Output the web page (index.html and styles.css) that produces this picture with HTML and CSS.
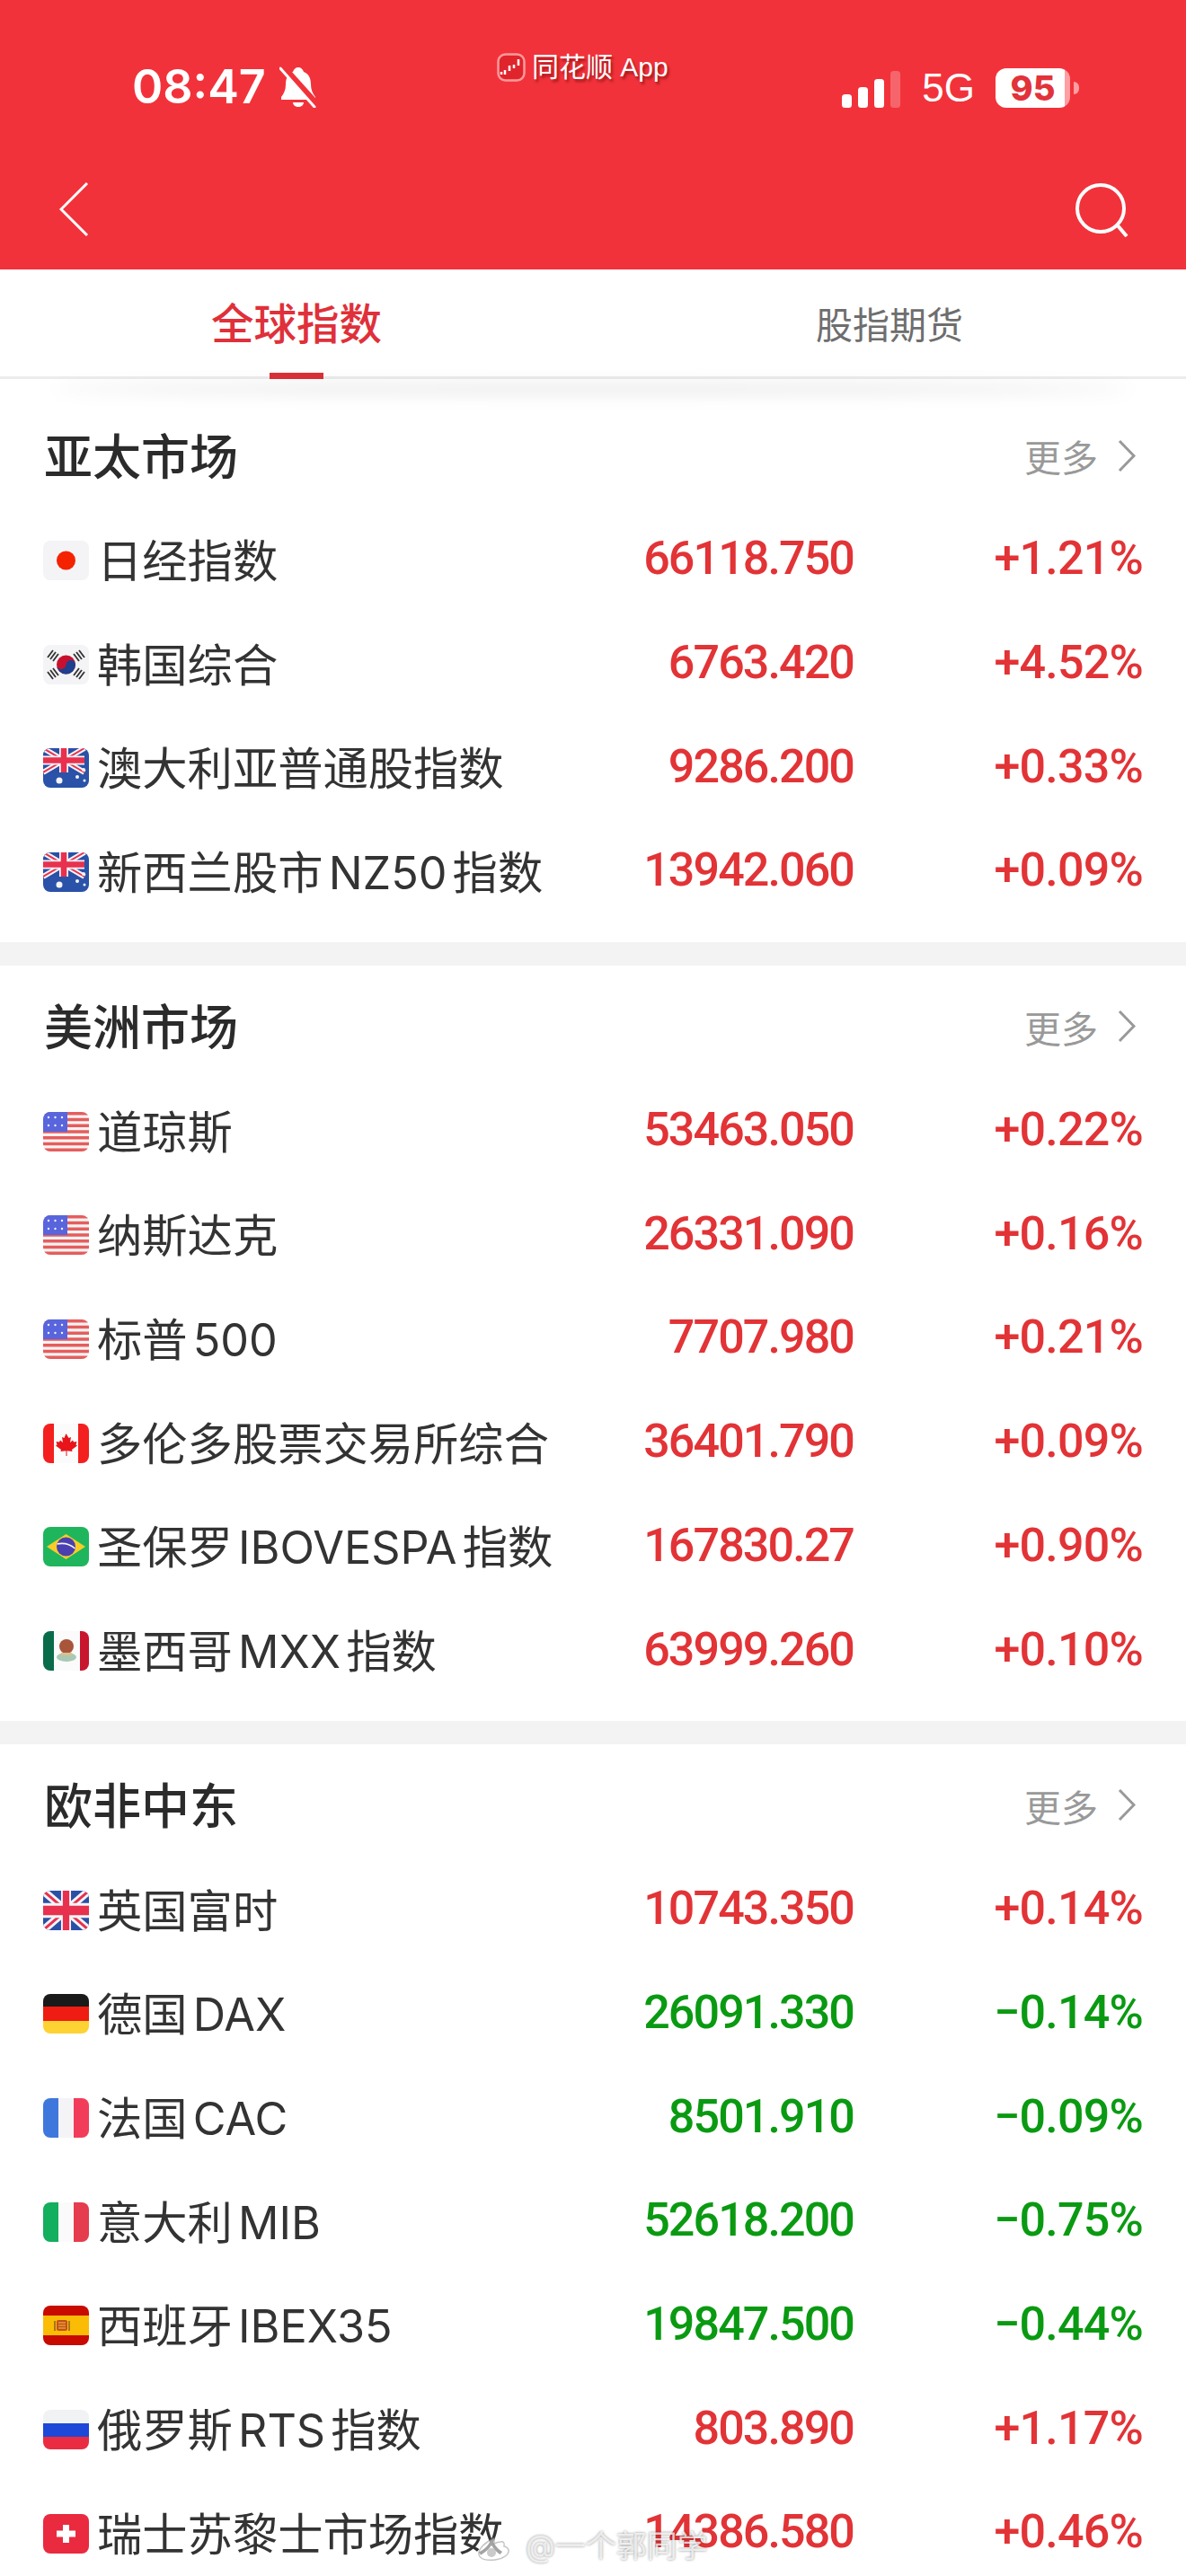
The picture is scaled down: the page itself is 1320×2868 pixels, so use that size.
FILE: index.html
```html
<!DOCTYPE html>
<html>

<head>
    <title>全球指数</title>
    <link rel="stylesheet" href="styles.css">
</head>

<body>
    <svg class="defs" width="0" height="0">
        <defs>
            <g id="jack">
                <rect width="46" height="27" fill="#2a4fa6" />
                <path d="M0 0L46 27M46 0L0 27" stroke="#f4f4f6" stroke-width="6" />
                <path d="M0 0L46 27M46 0L0 27" stroke="#e8304f" stroke-width="2" />
                <path d="M23 0V27M0 13.500H46" stroke="#f4f4f6" stroke-width="10" />
                <path d="M23 0V27M0 13.500H46" stroke="#e8304f" stroke-width="6.500" />
            </g>
            <symbol id="f-jp" viewBox="0 0 51 44">
                <rect width="51" height="44" fill="#f4f4f6" />
                <circle cx="25.500" cy="22" r="10.500" fill="#f52200" />
            </symbol>
            <symbol id="f-kr" viewBox="0 0 51 44">
                <rect width="51" height="44" fill="#f4f4f6" />
                <circle cx="25.500" cy="22" r="10.500" fill="#c8102e" />
                <path d="M15 22a10.500 10.500 0 0 0 21 0c0-3-2.500-5-5.200-5s-5.300 2.500-5.300 5-2.500 5-5.200 5-5.300-2-5.300-5z" fill="#1f3f8f" />
                <g stroke="#333" stroke-width="1.800">
                    <path d="M6 14L12 6M9 16L15 8M12 18L18 10" transform="translate(-1 0)" />
                    <path d="M45 14L39 6M42 16L36 8M39 18L33 10" transform="translate(1 0)" />
                    <path d="M6 30L12 38M9 28L15 36M12 26L18 34" transform="translate(-1 0)" />
                    <path d="M45 30L39 38M42 28L36 36M39 26L33 34" transform="translate(1 0)" />
                </g>
            </symbol>
            <symbol id="f-au" viewBox="0 0 51 44">
                <rect width="51" height="44" fill="#2a52a8" />
                <use href="#jack" />
                <g fill="#f4f4f6">
                    <circle cx="18" cy="36" r="3.500" />
                    <circle cx="45" cy="24" r="2" />
                    <circle cx="38" cy="32" r="2" />
                    <circle cx="46" cy="36" r="1.500" />
                </g>
            </symbol>
            <symbol id="f-us" viewBox="0 0 51 44">
                <rect width="51" height="44" fill="#f7f3f3" />
                <path d="M0 1.700H51M0 8.500H51M0 15.300H51M0 22H51M0 28.800H51M0 35.500H51M0 42.300H51" stroke="#e55d5d" stroke-width="3.400" />
                <rect width="27" height="22" fill="#5865dc" />
                <g fill="#f4f4f6">
                    <circle cx="6" cy="6" r="1.200" /><circle cx="13.500" cy="6" r="1.200" /><circle cx="21" cy="6" r="1.200" />
                    <circle cx="6" cy="15" r="1.200" /><circle cx="13.500" cy="15" r="1.200" /><circle cx="21" cy="15" r="1.200" />
                </g>
            </symbol>
            <symbol id="f-ca" viewBox="0 0 51 44">
                <rect width="51" height="44" fill="#fbfbfb" />
                <rect width="12" height="44" fill="#f41f1f" />
                <rect x="39" width="12" height="44" fill="#f41f1f" />
                <path d="M25.500 11l3 5 2.500-1-1 6 3-2.500 1 2 3.500-.5-1 3.500 1.500 1-6 4.500.5 2-6-.8V36h-1v-5.800l-6 .8.500-2-6-4.500 1.500-1-1-3.500 3.500.5 1-2 3 2.500-1-6 2.500 1z" fill="#e8141a" />
            </symbol>
            <symbol id="f-br" viewBox="0 0 51 44">
                <rect width="51" height="44" fill="#1fb55c" />
                <path d="M25.500 8L47 22 25.500 36 4 22z" fill="#f7cc2a" />
                <circle cx="25.500" cy="22" r="10.500" fill="#4a3fb0" />
                <path d="M15.500 19c7-1.500 14 0 20 5" stroke="#f4f4f6" stroke-width="1.600" fill="none" />
            </symbol>
            <symbol id="f-mx" viewBox="0 0 51 44">
                <rect width="51" height="44" fill="#fbfbfb" />
                <rect width="12" height="44" fill="#0a6b4b" />
                <rect x="41" width="10" height="44" fill="#c8162e" />
                <ellipse cx="26" cy="17" rx="8" ry="8" fill="#a8553a" />
                <ellipse cx="26" cy="29" rx="11" ry="5" fill="#a9c9b4" />
                <rect x="20" y="24" width="12" height="3" fill="#d9c08f" />
            </symbol>
            <symbol id="f-gb" viewBox="0 0 46 27" preserveAspectRatio="none">
                <use href="#jack" />
            </symbol>
            <symbol id="f-de" viewBox="0 0 51 44">
                <rect width="51" height="15" fill="#1a1a1a" />
                <rect y="14" width="51" height="16" fill="#ee1c12" />
                <rect y="30" width="51" height="14" fill="#fdd334" />
            </symbol>
            <symbol id="f-fr" viewBox="0 0 51 44">
                <rect width="51" height="44" fill="#f4f4f6" />
                <rect width="17" height="44" fill="#3f78dd" />
                <rect x="34" width="17" height="44" fill="#f23d5a" />
            </symbol>
            <symbol id="f-it" viewBox="0 0 51 44">
                <rect width="51" height="44" fill="#fafafa" />
                <rect width="17" height="44" fill="#13ae5e" />
                <rect x="34" width="17" height="44" fill="#e53d4d" />
            </symbol>
            <symbol id="f-es" viewBox="0 0 51 44">
                <rect width="51" height="44" fill="#c80a00" />
                <rect y="11" width="51" height="22" fill="#fbbc05" />
                <rect x="15" y="16" width="12" height="12" rx="2" fill="#c4501a" />
                <path d="M13 17v11M29 17v11" stroke="#a8761a" stroke-width="2" />
                <path d="M17 19h8M17 22h8M17 25h8" stroke="#f3c44a" stroke-width="1" />
            </symbol>
            <symbol id="f-ru" viewBox="0 0 51 44">
                <rect width="51" height="15" fill="#f1f2f4" />
                <rect y="15" width="51" height="15" fill="#1d48d8" />
                <rect y="30" width="51" height="14" fill="#ea2c42" />
            </symbol>
            <symbol id="f-ch" viewBox="0 0 51 44">
                <rect width="51" height="44" fill="#ea2a3f" />
                <path d="M22 12h7v6.500h7v7h-7V32h-7v-6.500h-7v-7h7z" fill="#fff" />
            </symbol>
        </defs>
    </svg>

    <div class="page">
        <header class="top">
            <div class="status">
                <div class="clock">
                    <span class="time">08:47</span>
                    <svg class="bell" viewBox="0 0 42 47">
                        <path d="M21 2c3 0 5 2 6 5 6 2 8 8 8 14 0 6 2 10 5 14v3H2v-3c3-4 5-8 5-14 0-6 2-12 8-14 1-3 3-5 6-5z" fill="#fff" />
                        <path d="M15 41h12c0 3-3 5-6 5s-6-2-6-5z" fill="#fff" />
                        <path d="M4 2L41 43" stroke="#f2323a" stroke-width="8" />
                        <path d="M1 3L39 46" stroke="#fff" stroke-width="3" stroke-linecap="round" />
                    </svg>
                </div>
                <div class="signal">
                    <svg class="bars" viewBox="0 0 65 41" width="65" height="41">
                        <rect x="0" y="26" width="11" height="15" rx="3.500" fill="#fff" />
                        <rect x="18" y="18" width="11" height="23" rx="3.500" fill="#fff" />
                        <rect x="36" y="9" width="11" height="32" rx="3.500" fill="#fff" />
                        <rect x="54" y="0" width="11" height="41" rx="3.500" fill="#fff" fill-opacity="0.25" />
                    </svg>
                    <span class="net">5G</span>
                    <div class="battery">
                        <span class="level">95</span>
                        <span class="nub"></span>
                    </div>
                </div>
            </div>

            <div class="app-mark">
                <svg class="app-logo" viewBox="0 0 32 32" width="32" height="32">
                    <rect x="1.500" y="1.500" width="29" height="29" rx="8" fill="#e0242c" stroke="#ff9a9a" stroke-width="2.500" />
                    <path d="M5 24v-3M9 24v-5M14 20v-6M19 17v-4M24 14V7" stroke="#fff" stroke-width="2.500" />
                </svg>
                <span>同花顺 App</span>
            </div>

            <nav class="nav">
                <svg class="back" viewBox="0 0 33 61" width="33" height="61">
                    <path d="M31 1L2 30l29 29" fill="none" stroke="#fff" stroke-width="3" />
                </svg>
                <svg class="find" viewBox="0 0 60 60" width="60" height="60">
                    <circle cx="28" cy="28" r="26" fill="none" stroke="#fff" stroke-width="4" />
                    <path d="M46 46l11 13" fill="none" stroke="#fff" stroke-width="4" />
                </svg>
            </nav>
        </header>

        <div class="tabs">
            <div class="tab active">全球指数</div>
            <div class="tab">股指期货</div>
        </div>

        <div class="list">
            <section class="market">
                <div class="market-head">
                    <h2>亚太市场</h2>
                    <a class="more">更多<svg viewBox="0 0 20 37" width="20" height="37"><path d="M2 2l16 16.500L2 35" fill="none" stroke="#999" stroke-width="3" /></svg></a>
                </div>
                <div class="row"><svg class="flag"><use href="#f-jp" /></svg><span class="name">日经指数</span><span class="num up">66118.750</span><span class="pct up">+1.21%</span></div>
                <div class="row"><svg class="flag"><use href="#f-kr" /></svg><span class="name">韩国综合</span><span class="num up">6763.420</span><span class="pct up">+4.52%</span></div>
                <div class="row"><svg class="flag"><use href="#f-au" /></svg><span class="name">澳大利亚普通股指数</span><span class="num up">9286.200</span><span class="pct up">+0.33%</span></div>
                <div class="row"><svg class="flag"><use href="#f-au" /></svg><span class="name">新西兰股市 NZ50 指数</span><span class="num up">13942.060</span><span class="pct up">+0.09%</span></div>
            </section>

            <section class="market">
                <div class="market-head">
                    <h2>美洲市场</h2>
                    <a class="more">更多<svg viewBox="0 0 20 37" width="20" height="37"><path d="M2 2l16 16.500L2 35" fill="none" stroke="#999" stroke-width="3" /></svg></a>
                </div>
                <div class="row"><svg class="flag"><use href="#f-us" /></svg><span class="name">道琼斯</span><span class="num up">53463.050</span><span class="pct up">+0.22%</span></div>
                <div class="row"><svg class="flag"><use href="#f-us" /></svg><span class="name">纳斯达克</span><span class="num up">26331.090</span><span class="pct up">+0.16%</span></div>
                <div class="row"><svg class="flag"><use href="#f-us" /></svg><span class="name">标普 500</span><span class="num up">7707.980</span><span class="pct up">+0.21%</span></div>
                <div class="row"><svg class="flag"><use href="#f-ca" /></svg><span class="name">多伦多股票交易所综合</span><span class="num up">36401.790</span><span class="pct up">+0.09%</span></div>
                <div class="row"><svg class="flag"><use href="#f-br" /></svg><span class="name">圣保罗 IBOVESPA 指数</span><span class="num up">167830.27</span><span class="pct up">+0.90%</span></div>
                <div class="row"><svg class="flag"><use href="#f-mx" /></svg><span class="name">墨西哥 MXX 指数</span><span class="num up">63999.260</span><span class="pct up">+0.10%</span></div>
            </section>

            <section class="market">
                <div class="market-head">
                    <h2>欧非中东</h2>
                    <a class="more">更多<svg viewBox="0 0 20 37" width="20" height="37"><path d="M2 2l16 16.500L2 35" fill="none" stroke="#999" stroke-width="3" /></svg></a>
                </div>
                <div class="row"><svg class="flag"><use href="#f-gb" /></svg><span class="name">英国富时</span><span class="num up">10743.350</span><span class="pct up">+0.14%</span></div>
                <div class="row"><svg class="flag"><use href="#f-de" /></svg><span class="name">德国 DAX</span><span class="num down">26091.330</span><span class="pct down">−0.14%</span></div>
                <div class="row"><svg class="flag"><use href="#f-fr" /></svg><span class="name">法国 CAC</span><span class="num down">8501.910</span><span class="pct down">−0.09%</span></div>
                <div class="row"><svg class="flag"><use href="#f-it" /></svg><span class="name">意大利 MIB</span><span class="num down">52618.200</span><span class="pct down">−0.75%</span></div>
                <div class="row"><svg class="flag"><use href="#f-es" /></svg><span class="name">西班牙 IBEX35</span><span class="num down">19847.500</span><span class="pct down">−0.44%</span></div>
                <div class="row"><svg class="flag"><use href="#f-ru" /></svg><span class="name">俄罗斯 RTS 指数</span><span class="num up">803.890</span><span class="pct up">+1.17%</span></div>
                <div class="row"><svg class="flag"><use href="#f-ch" /></svg><span class="name">瑞士苏黎士市场指数</span><span class="num up">14386.580</span><span class="pct up">+0.46%</span></div>
            </section>
        </div>

        <div class="stamp">
            <svg class="stamp-logo" viewBox="0 0 48 34" width="48" height="34">
                <path d="M20 8C10 12 2 20 3 26c1 6 10 7 18 6 9-1 16-6 15-11-1-3-4-4-5-4 1-4-1-6-4-5-2 0-5 1-7 2z" fill="#fff" fill-opacity="0.55" stroke="#8a8a8a" stroke-opacity="0.5" stroke-width="1.500" />
                <circle cx="17" cy="24" r="5" fill="#8a8a8a" fill-opacity="0.45" />
                <path d="M34 2c6 0 11 5 10 12M35 8c3 0 5 2 4 6" fill="none" stroke="#fff" stroke-opacity="0.7" stroke-width="2" />
            </svg>
            <span>@一个郭同学</span>
        </div>
    </div>
</body>

</html>
```

FILE: styles.css
```css
* {
    box-sizing: border-box;
}

body {
    margin: 0;
    background: #fff;
    font-family: Inter, "Noto Sans CJK SC", sans-serif;
    color: #333;
}

.defs {
    position: absolute;
}

.page {
    position: relative;
    width: 1320px;
    height: 2868px;
    overflow: hidden;
}

/* red header */
.top {
    position: relative;
    height: 300px;
    padding-top: 74px;
    background-color: #f2323a;
    color: #fff;
}

.status {
    display: flex;
    justify-content: space-between;
    align-items: flex-end;
    height: 46px;
    padding: 0 129px 0 147px;
}

.clock {
    display: flex;
    align-items: center;
    gap: 15px;
}

.time {
    font-family: Inter, sans-serif;
    font-size: 52px;
    font-weight: 600;
    line-height: 46px;
}

.bell {
    width: 42px;
    height: 47px;
}

.signal {
    display: flex;
    align-items: flex-end;
    height: 44px;
}

.bars {
    margin-right: 24px;
}

.net {
    font-family: "Liberation Sans", sans-serif;
    font-size: 44px;
    line-height: 44px;
    margin-right: 23px;
}

.battery {
    position: relative;
    width: 83px;
    height: 44px;
    border-radius: 12px;
    background: linear-gradient(to right, #fff 93%, #ff9ea3 93%);
    color: #e2323a;
    font-family: Inter, sans-serif;
    font-size: 38px;
    font-weight: 800;
    line-height: 44px;
    text-align: center;
}

.nub {
    position: absolute;
    top: 15px;
    right: -10px;
    width: 6px;
    height: 14px;
    border-radius: 0 6px 6px 0;
    background-color: #ff9ea3;
}

.app-mark {
    position: absolute;
    top: 59px;
    left: 553px;
    display: flex;
    align-items: center;
    gap: 7px;
    font-family: "Liberation Sans", "Noto Sans CJK SC", sans-serif;
    font-size: 30px;
    line-height: 32px;
    text-shadow: 2px 3px 3px rgba(90, 0, 0, 0.55);
}

.nav {
    display: flex;
    justify-content: space-between;
    align-items: center;
    margin-top: 83px;
    padding: 0 63px 0 66px;
}

/* tabs */
.tabs {
    position: relative;
    display: flex;
    height: 122px;
    background-color: #fff;
    border-bottom: 3px solid #ececec;
}

.tabs::after {
    content: "";
    position: absolute;
    left: 60px;
    right: 60px;
    top: 128px;
    height: 10px;
    border-radius: 50%;
    background-color: rgba(0, 0, 0, 0.1);
    filter: blur(9px);
}

.tab {
    position: relative;
    width: 660px;
    padding-top: 38px;
    text-align: center;
    font-size: 41px;
    line-height: 48px;
    color: #6e6e6e;
}

.tab.active {
    padding-top: 37px;
    font-size: 47.500px;
    font-weight: 500;
    color: #e0303a;
}

.tab.active::after {
    content: "";
    position: absolute;
    left: 300px;
    width: 60px;
    bottom: -3px;
    height: 7px;
    background-color: #db3038;
}

/* market sections */
.list {
    padding-top: 17px;
}

.market {
    padding-bottom: 20px;
    border-bottom: 26px solid #f3f3f3;
}

.market-head {
    display: flex;
    justify-content: space-between;
    align-items: center;
    height: 127px;
    padding: 9px 56px 0 49px;
}

.market-head h2 {
    margin: 5px 0 0;
    font-size: 54px;
    font-weight: 500;
    line-height: 60px;
    color: #2b2b2b;
}

.more {
    display: flex;
    align-items: center;
    gap: 22px;
    font-size: 41px;
    color: #999;
}

.row {
    display: flex;
    align-items: center;
    height: 115.700px;
    padding: 0 48px 0 48px;
}

.flag {
    flex: none;
    width: 51px;
    height: 44px;
    margin-right: 9px;
    border-radius: 8px;
}

.name {
    flex: 1;
    padding-top: 2px;
    font-size: 50.300px;
    line-height: 60px;
    word-spacing: -8px;
    white-space: nowrap;
}

.num,
.pct {
    flex: none;
    padding-bottom: 3px;
    font-family: Roboto, sans-serif;
    font-size: 52px;
    font-weight: 500;
    line-height: 60px;
    text-align: right;
}

.num {
    width: 300px;
    letter-spacing: -1.900px;
}

.pct {
    width: 322px;
    letter-spacing: -0.800px;
}

.up {
    color: #e23336;
}

.down {
    color: #0a9a12;
}

/* repost stamp over the last row */
.stamp {
    position: absolute;
    top: 2815px;
    left: 530px;
    display: flex;
    align-items: center;
    gap: 7px;
    font-size: 34px;
    line-height: 40px;
    color: rgba(255, 255, 255, 0.75);
    text-shadow: 0 0 3px rgba(0, 0, 0, 0.45);
}
```
